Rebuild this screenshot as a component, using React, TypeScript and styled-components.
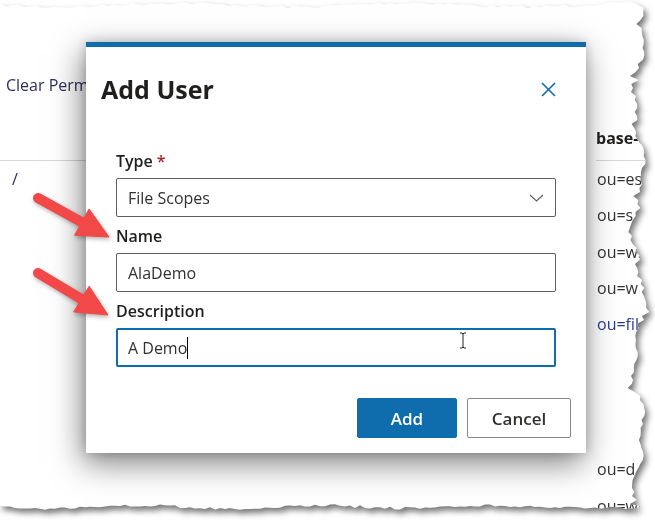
import React from "react";
import styled, { createGlobalStyle } from "styled-components";

const GlobalStyle = createGlobalStyle`
  html, body { margin: 0; padding: 0; background: #fff; }
  * { box-sizing: border-box; }
`;

// torn paper outline, generated once with a fixed seed
function tornEdge(): string {
  let seed = 7;
  const rnd = () => {
    seed = (seed * 16807) % 2147483647;
    return seed / 2147483647;
  };
  const pts: string[] = [];
  for (let x = 0; x <= 636; x += 6) {
    const y = 5 + 2 * Math.sin(x / 37) + (rnd() - 0.5) * 3;
    pts.push(`${x.toFixed(1)}px ${y.toFixed(1)}px`);
  }
  for (let y = 8; y <= 505; y += 4) {
    const base = 638 + 5 * Math.sin(y / 21) + 3 * Math.sin(y / 8 + 1);
    const spike = rnd() > 0.85 ? (rnd() - 0.5) * 10 : 0;
    const x = base + (rnd() - 0.5) * 4 + spike;
    pts.push(`${x.toFixed(1)}px ${y}px`);
  }
  for (let x = 640; x >= 0; x -= 5) {
    const y = 507 + 1.5 * Math.sin(x / 29) + (rnd() - 0.5) * 3;
    pts.push(`${x}px ${y.toFixed(1)}px`);
  }
  return pts.join(", ");
}

const CLIP = tornEdge();

const Screen = styled.div`
  width: 655px;
  height: 525px;
  background: #fff;
  position: relative;
  overflow: hidden;
  font-family: "Open Sans", "Noto Sans", sans-serif;
  color: #323130;
`;

const Paper = styled.div`
  width: 100%;
  height: 100%;
  filter: drop-shadow(3px 4px 3px rgba(0, 0, 0, 0.55));
`;

const Page = styled.div<{ $clip: string }>`
  width: 100%;
  height: 100%;
  background: #fff;
  clip-path: polygon(${(p) => p.$clip});
  position: relative;
  display: flex;
  justify-content: space-between;
`;

const LeftPane = styled.div`
  width: 86px;
  padding-top: 74px;
  overflow: hidden;
`;

const Toolbar = styled.div`
  font-size: 16px;
  line-height: 22px;
  color: #2e2d5e;
  white-space: nowrap;
  overflow: hidden;
  padding-left: 6px;
  height: 87px;
  border-bottom: 1px solid #d6d6d6;
`;

const RightPane = styled.div`
  width: 59px;
  padding-top: 126px;
  overflow: hidden;
`;

const ColHead = styled.div`
  height: 35px;
  font-size: 16px;
  font-weight: 700;
  line-height: 24px;
  border-bottom: 1px solid #d6d6d6;
  white-space: nowrap;
  color: #201f1e;
`;

const Cell = styled.div<{ $link?: boolean }>`
  height: 36.3px;
  line-height: 36px;
  font-size: 16px;
  white-space: nowrap;
  padding-left: 1px;
  color: ${(p) => (p.$link ? "#2b3a8b" : "#323130")};
`;

const LeftCell = styled(Cell)`
  padding-left: 12px;
  color: #2e2d5e;
`;

const Modal = styled.div`
  position: absolute;
  left: 86px;
  top: 42px;
  width: 500px;
  background: #fff;
  border-top: 5px solid #0f6cad;
  box-shadow: -3px 10px 30px rgba(0, 0, 0, 0.5), 0 0 10px rgba(0, 0, 0, 0.18);
`;

const Header = styled.div`
  display: flex;
  align-items: center;
  justify-content: space-between;
  padding: 26px 30px 0 15px;
`;

const Title = styled.h2`
  margin: 0;
  font-size: 25px;
  line-height: 32px;
  font-weight: 700;
  color: #201f1e;
`;

const CloseButton = styled.button`
  border: 0;
  background: none;
  padding: 0;
  width: 15px;
  height: 15px;
  display: flex;
  cursor: pointer;
`;

const Body = styled.div`
  padding: 42px 30px 0 30px;
  display: flex;
  flex-direction: column;
`;

const Label = styled.label<{ $first?: boolean }>`
  display: block;
  font-size: 16px;
  line-height: 24px;
  font-weight: 600;
  color: #201f1e;
  margin: ${(p) => (p.$first ? "2px" : "7px")} 0 5px;
`;

const Required = styled.span`
  color: #a4262c;
  margin-left: 4px;
`;

const Box = styled.div<{ $focused?: boolean }>`
  height: 39px;
  display: flex;
  align-items: center;
  justify-content: space-between;
  border: ${(p) => (p.$focused ? "2px solid #0f6cad" : "1px solid #605e5c")};
  border-radius: 2px;
  padding: 1px ${(p) => (p.$focused ? "10px" : "11px")} 0;
  font-size: 16px;
  color: #323130;
  position: relative;
`;

const Value = styled.span`
  display: inline-flex;
  align-items: center;
`;

const Caret = styled.span`
  display: inline-block;
  width: 1px;
  height: 22px;
  background: #000;
`;

const IBeam = styled.svg`
  position: absolute;
  left: 341px;
  top: 2px;
`;

const Footer = styled.div`
  display: flex;
  justify-content: flex-end;
  gap: 10px;
  padding: 31px 15px 15px;
`;

const Button = styled.button<{ $primary?: boolean }>`
  height: 40px;
  width: ${(p) => (p.$primary ? "100px" : "104px")};
  border-radius: 2px;
  font-family: inherit;
  font-size: 17px;
  font-weight: 600;
  cursor: pointer;
  border: 1px solid ${(p) => (p.$primary ? "#0f6cad" : "#8a8886")};
  background: ${(p) => (p.$primary ? "#0f6cad" : "#fff")};
  color: ${(p) => (p.$primary ? "#fff" : "#323130")};
`;

const Arrows = styled.svg`
  position: absolute;
  left: 0;
  top: 0;
  pointer-events: none;
  filter: drop-shadow(1px 2px 2px rgba(0, 0, 0, 0.3));
`;

function Arrow({ from, tip }: { from: [number, number]; tip: [number, number] }) {
  const dx = tip[0] - from[0];
  const dy = tip[1] - from[1];
  const len = Math.hypot(dx, dy);
  const ux = dx / len;
  const uy = dy / len;
  const bx = tip[0] - 31 * ux;
  const by = tip[1] - 31 * uy;
  const px = -uy * 15;
  const py = ux * 15;
  return (
    <g fill="#f24848" stroke="#f24848">
      <line x1={from[0]} y1={from[1]} x2={bx + 3 * ux} y2={by + 3 * uy} strokeWidth={10} strokeLinecap="round" />
      <polygon
        strokeWidth={1}
        strokeLinejoin="round"
        points={`${tip[0]},${tip[1]} ${bx + px},${by + py} ${bx - px},${by - py}`}
      />
    </g>
  );
}

const rows = ["ou=es", "ou=s", "ou=ws", "ou=w", "ou=fil", "", "", "", "ou=d", "ou=wo"];

export default function App() {
  return (
    <Screen>
      <GlobalStyle />
      <Paper>
        <Page $clip={CLIP}>
          <LeftPane>
            <Toolbar>Clear Perm</Toolbar>
            <LeftCell>/</LeftCell>
          </LeftPane>
          <RightPane>
            <ColHead>base-dn</ColHead>
            {rows.map((r, i) => (
              <Cell key={i} $link={r === "ou=fil"}>
                {r}
              </Cell>
            ))}
          </RightPane>

          <Modal>
            <Header>
              <Title>Add User</Title>
              <CloseButton aria-label="Close">
                <svg width="15" height="15" viewBox="0 0 15 15">
                  <path d="M1 1 L14 14 M14 1 L1 14" stroke="#0f6cad" strokeWidth="1.6" />
                </svg>
              </CloseButton>
            </Header>
            <Body>
              <Label $first>
                Type<Required>*</Required>
              </Label>
              <Box>
                <Value>File Scopes</Value>
                <svg width="15" height="8" viewBox="0 0 15 8">
                  <path d="M1 1 L7.5 7 L14 1" fill="none" stroke="#605e5c" strokeWidth="1.1" />
                </svg>
              </Box>
              <Label>Name</Label>
              <Box>
                <Value>AlaDemo</Value>
              </Box>
              <Label>Description</Label>
              <Box $focused>
                <Value>
                  A Demo
                  <Caret />
                </Value>
                <IBeam width="8" height="17" viewBox="0 0 8 17">
                  <path d="M1 1 H3 L4 2 L5 1 H7 M4 2 V15 M1 16 H3 L4 15 L5 16 H7" fill="none" stroke="#222" strokeWidth="1" />
                </IBeam>
              </Box>
            </Body>
            <Footer>
              <Button $primary>Add</Button>
              <Button>Cancel</Button>
            </Footer>
          </Modal>

          <Arrows width="655" height="525">
            <Arrow from={[38, 198]} tip={[109, 237]} />
            <Arrow from={[38, 273]} tip={[108, 315]} />
          </Arrows>
        </Page>
      </Paper>
    </Screen>
  );
}
